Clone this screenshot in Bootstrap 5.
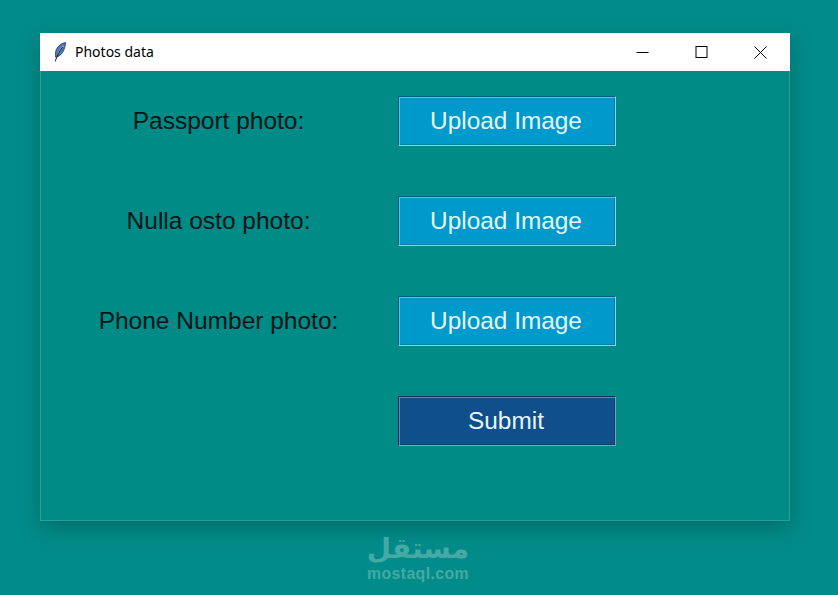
<!DOCTYPE html>
<html lang="en">
<head>
<meta charset="utf-8">
<title>Photos data</title>
<link href="https://cdn.jsdelivr.net/npm/bootstrap@5.3.0/dist/css/bootstrap.min.css" rel="stylesheet">
<style>
html,body{height:100%;}
body{background:#028c89;font-family:"Liberation Sans",Arial,sans-serif;overflow:hidden;padding:33px 48px 0 40px;}
.app-window{width:750px;height:488px;background:#008b86;box-shadow:0 7px 20px rgba(0,60,60,.38);}
.title-strip{height:38px;background:#fff;padding:0 0 0 13px;color:#000;font-size:14px;font-family:"Noto Sans",sans-serif;}
.title-text{margin:-2px 0 0 8px;}
.win-ctl{width:59px;height:38px;}
.form-area{height:450px;padding:25px 0 0 0;box-shadow:inset 1px 0 0 rgba(70,175,165,.6),inset -1px -1px 0 rgba(70,175,165,.6);}
.form-line{height:50px;margin-bottom:50px;}
.form-label-cell{width:358px;padding-right:1px;font-size:24.5px;color:#001517;text-align:center;}
.tk-btn{width:218px;height:50px;font-size:24.4px;line-height:1;color:#e6f6fc;border:1px solid;border-radius:0;padding:0 2px 0 0;display:flex;align-items:center;justify-content:center;}
.tk-up{background:#0099cc;border-color:#075f80 #86d4ee #86d4ee #075f80;box-shadow:inset 1px 1px 0 #5cc0e2,inset -1px -1px 0 #0a7da6;}
.tk-sub{background:#0f4f8b;border-color:#0e3358 #7ba0c2 #7ba0c2 #0e3358;box-shadow:inset 1px 1px 0 #6488ae,inset -1px -1px 0 #123f6c;}
.brand-mark{margin-top:11px;width:750px;color:#45a9a6;text-align:center;line-height:1;transform:translateX(3px);}
.brand-ar{font-family:"DejaVu Sans",sans-serif;font-weight:700;font-size:28px;line-height:34px;}
.brand-la{font-weight:700;font-size:15.8px;letter-spacing:.4px;line-height:15px;}
</style>
</head>
<body>
<div class="app-window">
  <div class="title-strip d-flex align-items-center">
    <svg width="14" height="20" viewBox="0 0 14 20" aria-hidden="true">
      <path d="M12.6 .6C9 1 5.2 3.6 3.4 7.4 2 10.4 2.2 13.6 2.8 15.4 6.4 14.6 9.6 11.6 11 7.6 11.9 5 12.6 2.6 12.6 .6Z" fill="#4f78b5" stroke="#1f3561" stroke-width=".8"/>
      <path d="M10.6 3.6C8.6 5 6.2 8.6 5.4 11.6" fill="none" stroke="#a9c4e6" stroke-width="1"/>
      <path d="M9.6 5C6.6 9 4 14 2.2 19.4" fill="none" stroke="#16233f" stroke-width="1"/>
    </svg>
    <span class="title-text">Photos data</span>
    <div class="d-flex ms-auto">
      <div class="win-ctl d-flex align-items-center justify-content-center">
        <svg width="13" height="13" viewBox="0 0 13 13"><path d="M.5 6.5h12" stroke="#000" fill="none"/></svg>
      </div>
      <div class="win-ctl d-flex align-items-center justify-content-center">
        <svg width="13" height="13" viewBox="0 0 13 13"><rect x="1" y=".5" width="11" height="11" stroke="#000" fill="none"/></svg>
      </div>
      <div class="win-ctl d-flex align-items-center justify-content-center">
        <svg width="13" height="13" viewBox="0 0 13 13"><path d="M.5 .5l12 12M12.5 .5l-12 12" stroke="#000" fill="none"/></svg>
      </div>
    </div>
  </div>
  <div class="form-area">
    <div class="form-line d-flex align-items-center">
      <div class="form-label-cell">Passport photo:</div>
      <button type="button" class="tk-btn tk-up">Upload Image</button>
    </div>
    <div class="form-line d-flex align-items-center">
      <div class="form-label-cell">Nulla osto photo:</div>
      <button type="button" class="tk-btn tk-up">Upload Image</button>
    </div>
    <div class="form-line d-flex align-items-center">
      <div class="form-label-cell">Phone Number photo:</div>
      <button type="button" class="tk-btn tk-up">Upload Image</button>
    </div>
    <div class="form-line d-flex align-items-center">
      <div class="form-label-cell"></div>
      <button type="button" class="tk-btn tk-sub">Submit</button>
    </div>
  </div>
</div>
<div class="brand-mark">
  <div class="brand-ar" dir="rtl">مستقل</div>
  <div class="brand-la">mostaql.com</div>
</div>
</body>
</html>
